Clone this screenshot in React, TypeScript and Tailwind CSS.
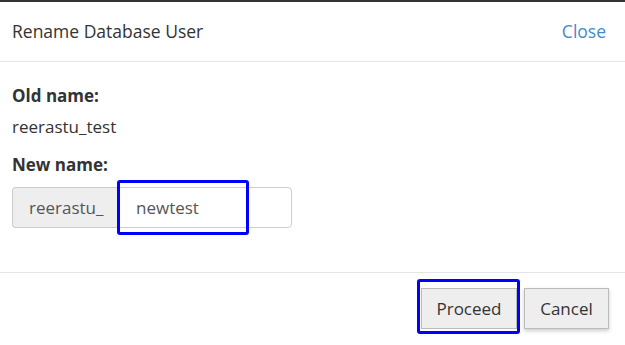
export default function App() {
  return (
    <div
      className="w-[625px] h-[345px] bg-white border-t-2 border-[#333] text-[#333] overflow-hidden"
      style={{ fontFamily: '"Open Sans", sans-serif' }}
    >
      <div className="flex items-center justify-between h-[60px] px-3 border-b border-[#e5e5e5]">
        <h4 className="text-[17.5px]">Rename Database User</h4>
        <a className="text-[17.5px] text-[#428bca] mr-[7px]">Close</a>
      </div>
      <div className="px-3 pt-[22px] h-[211px] border-b border-[#e5e5e5]">
        <div className="text-[17px] font-bold leading-[24px]">Old name:</div>
        <div className="text-[17px] leading-[24px] mt-[7px]">reerastu_test</div>
        <div className="text-[17px] font-bold leading-[24px] mt-[14px]">New name:</div>
        <div className="flex mt-[10px] h-[41px] w-[280px]">
          <span className="flex items-center w-[106px] pl-[16px] text-[17px] bg-[#eee] border border-[#ccc] rounded-l-[4px] border-r-0 text-[#555]">
            reerastu_
          </span>
          <div className="relative flex-1 flex items-center border border-[#ccc] rounded-r-[4px] pl-[17px] text-[17px] text-[#555]">
            newtest
            <div className="absolute left-[-2px] top-[-8px] w-[132px] h-[55px] border-[3px] border-[#0000ff] rounded-[3px]" />
          </div>
        </div>
      </div>
      <div className="flex justify-end gap-[7px] pr-[16px] pt-[15px]">
        <div className="relative">
          <button className="h-[41px] w-[96px] bg-[#eee] border border-[#bbb] text-[17px] text-[#333]">
            Proceed
          </button>
          <div className="absolute left-[-4px] top-[-9px] w-[103px] h-[55px] border-[3px] border-[#0000ff] rounded-[3px]" />
        </div>
        <button className="h-[41px] w-[85px] bg-[#eee] border border-[#bbb] text-[17px] text-[#333] shadow-[0_2px_4px_rgba(0,0,0,0.2)]">
          Cancel
        </button>
      </div>
    </div>
  );
}
